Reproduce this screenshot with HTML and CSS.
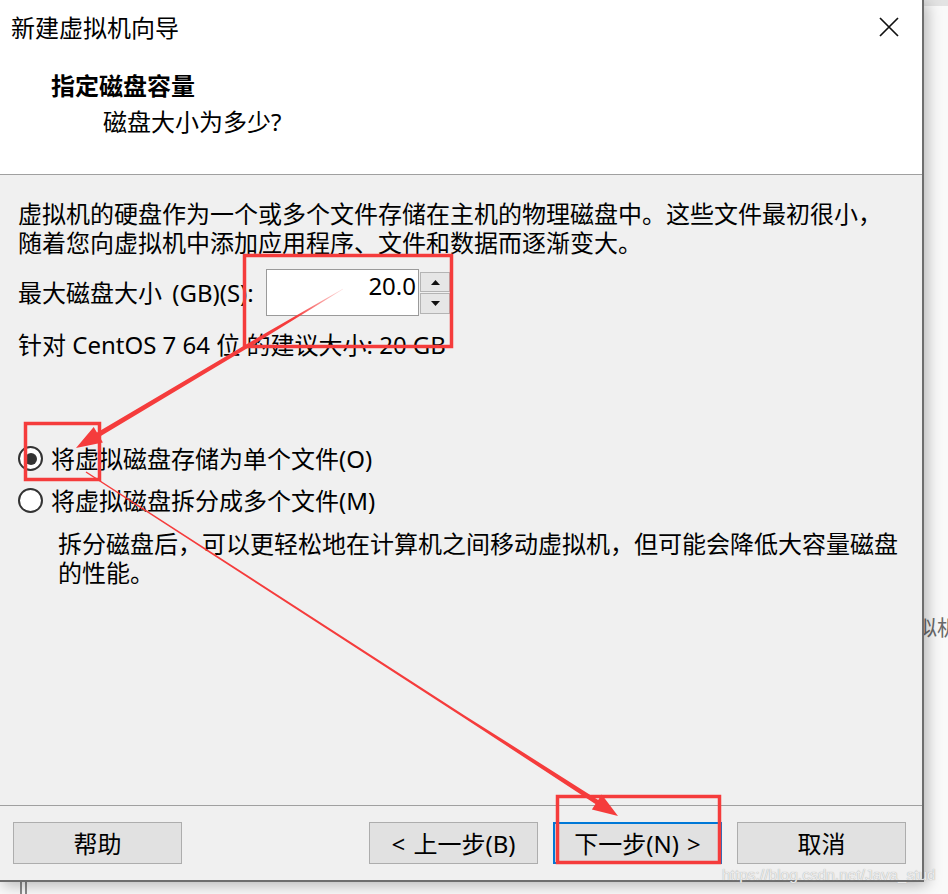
FILE: index.html
```html
<!DOCTYPE html>
<html lang="zh-CN">
<head>
<meta charset="utf-8">
<title>新建虚拟机向导</title>
<link rel="stylesheet" href="styles.css">
</head>
<body>
<div class="screen">
  <div class="backdrop">
    <div class="backdrop-bar"></div>
    <div class="backdrop-rail"></div>
    <div class="backdrop-text">虚拟机向导</div>
  </div>

  <div class="dialog">
    <header class="dlg-head">
      <div class="title-row">
        <div class="title">新建虚拟机向导</div>
        <svg class="close" width="20" height="20" viewBox="0 0 20 20" aria-label="关闭">
          <path d="M1 1 L19 19 M19 1 L1 19" stroke="#111" stroke-width="1.7" fill="none"/>
        </svg>
      </div>
      <div class="step-title">指定磁盘容量</div>
      <div class="step-sub">磁盘大小为多少?</div>
    </header>

    <main class="dlg-body">
      <p class="intro">虚拟机的硬盘作为一个或多个文件存储在主机的物理磁盘中。这些文件最初很小，<br>随着您向虚拟机中添加应用程序、文件和数据而逐渐变大。</p>

      <div class="size-row">
        <label class="size-label">最大磁盘大小 (GB)(S):</label>
        <div class="spin">
          <div class="spin-field">20.0</div>
          <div class="spin-btns">
            <div class="spin-btn up"><svg width="9" height="5" viewBox="0 0 9 5"><polygon points="4.5,0 9,5 0,5" fill="#111"/></svg></div>
            <div class="spin-btn down"><svg width="9" height="5" viewBox="0 0 9 5"><polygon points="0,0 9,0 4.5,5" fill="#111"/></svg></div>
          </div>
        </div>
      </div>

      <p class="hint">针对 CentOS 7 64 位 的建议大小: 20 GB</p>

      <div class="options">
        <div class="radio-row"><span class="radio checked"></span><span>将虚拟磁盘存储为单个文件(O)</span></div>
        <div class="radio-row"><span class="radio"></span><span>将虚拟磁盘拆分成多个文件(M)</span></div>
        <p class="desc">拆分磁盘后，可以更轻松地在计算机之间移动虚拟机，但可能会降低大容量磁盘<br>的性能。</p>
      </div>
    </main>

    <footer class="dlg-foot">
      <button class="btn btn-help">帮助</button>
      <button class="btn">&lt; 上一步(B)</button>
      <button class="btn btn-focus">下一步(N) &gt;</button>
      <button class="btn">取消</button>
    </footer>
  </div>

  <div class="watermark">https://blog.csdn.net/Java_stud</div>

  <svg class="annot" width="948" height="894" viewBox="0 0 948 894">
    <defs>
      <linearGradient id="fadeA" gradientUnits="userSpaceOnUse" x1="343" y1="289" x2="295" y2="318">
        <stop offset="0" stop-color="#f53c3c" stop-opacity="0.15"/>
        <stop offset="1" stop-color="#f53c3c" stop-opacity="1"/>
      </linearGradient>
    </defs>
    <rect x="244.5" y="255.5" width="207" height="91" fill="none" stroke="#f53c3c" stroke-width="3.5"/>
    <rect x="25.5" y="423.5" width="74" height="56" fill="none" stroke="#f53c3c" stroke-width="3.5"/>
    <rect x="557.5" y="796.5" width="162" height="66" fill="none" stroke="#f53c3c" stroke-width="3.5"/>
    <polygon fill="url(#fadeA)" points="343.1,289.3 251,346.1 99.6,436.8 102.9,442.4 76,448 93.7,427 97,432.6 249,342.7 342.9,288.7"/>
    <polygon fill="#f53c3c" points="85.6,472.5 463.4,717.4 595.4,804.1 591.9,809.6 618,816 601.7,794.4 598.2,799.9 464.6,715.4 86.4,471.5"/>
  </svg>
</div>
</body>
</html>
```

FILE: styles.css
```css
* { box-sizing: border-box; }

html, body {
  margin: 0;
  padding: 0;
}

body {
  width: 948px;
  height: 894px;
  overflow: hidden;
  background: #f9f9f9;
  font-family: "Noto Sans", "Noto Sans CJK SC", sans-serif;
  color: #000;
}

.screen {
  position: relative;
  width: 948px;
  height: 894px;
  overflow: hidden;
}

/* window behind the dialog */
.backdrop {
  position: absolute;
  inset: 0;
  background: #f9f9f9;
}

.backdrop-bar {
  height: 6px;
  background: #e3e3e3;
}

.backdrop-rail {
  position: absolute;
  left: 20px;
  top: 0;
  width: 7px;
  height: 894px;
  border-left: 2px solid #8a8a8a;
  border-right: 2px solid #8a8a8a;
}

.backdrop-text {
  position: absolute;
  left: 895px;
  top: 613px;
  font-size: 21px;
  line-height: 28px;
  color: #6a6a6a;
  white-space: nowrap;
}

/* dialog */
.dialog {
  position: relative;
  z-index: 1;
  width: 924px;
  height: 882px;
  border-right: 2px solid #6e6e6e;
  border-bottom: 2px solid #6e6e6e;
  background: #f0f0f0;
  display: flex;
  flex-direction: column;
  box-shadow: 3px 3px 14px rgba(0, 0, 0, 0.28);
}

.dlg-head {
  flex: none;
  height: 175px;
  background: #fff;
  border-bottom: 1px solid #a0a0a0;
}

.title-row {
  display: flex;
  justify-content: space-between;
  align-items: center;
  height: 36px;
  margin-top: 10px;
  padding-left: 11px;
  padding-right: 23px;
}

.title {
  font-size: 24px;
  line-height: 36px;
}

.close {
  display: block;
  margin-top: -2px;
}

.step-title {
  margin-top: 22px;
  padding-left: 51px;
  font-size: 24px;
  font-weight: 700;
  line-height: 36px;
}

.step-sub {
  padding-left: 103px;
  font-size: 24px;
  line-height: 36px;
}

.dlg-body {
  flex: 1;
  padding: 23.5px 0 0 18px;
  font-size: 24px;
}

.intro {
  margin: 0;
  line-height: 29px;
}

.size-row {
  display: flex;
  align-items: center;
  height: 47px;
  margin-top: 12.5px;
}

.size-label {
  width: 248px;
  line-height: 29px;
  white-space: nowrap;
  word-spacing: 4px;
}

.spin {
  display: flex;
  height: 47px;
}

.spin-field {
  width: 153px;
  height: 47px;
  background: #fff;
  border: 1px solid #9a9a9a;
  display: flex;
  justify-content: flex-end;
  align-items: flex-start;
  padding-right: 2px;
  line-height: 32px;
}

.spin-btns {
  display: flex;
  flex-direction: column;
  gap: 1px;
  padding: 3px 0 2px 1px;
}

.spin-btn {
  width: 30px;
  height: 20px;
  background: #e6e6e6;
  border: 1px solid #b4b4b4;
  display: flex;
  align-items: center;
  justify-content: center;
}

.spin-btn.down {
  height: 21px;
}

.spin-btn svg {
  display: block;
}

.hint {
  margin: 13.5px 0 0;
  line-height: 29px;
}

.options {
  margin-top: 79.5px;
}

.radio-row {
  display: flex;
  align-items: center;
  gap: 8px;
  height: 41.5px;
  line-height: 29px;
}

.radio {
  flex: none;
  width: 25px;
  height: 25px;
  border-radius: 50%;
  border: 2px solid #333;
  background: #fff;
  display: flex;
  align-items: center;
  justify-content: center;
}

.radio.checked::after {
  content: "";
  width: 12px;
  height: 12px;
  border-radius: 50%;
  background: #333;
}

.desc {
  margin: 7.5px 0 0;
  padding-left: 40px;
  line-height: 29px;
}

.dlg-foot {
  flex: none;
  height: 75px;
  border-top: 1px solid #a0a0a0;
  display: flex;
  gap: 15px;
  padding: 16px 16px 0 13px;
}

.btn {
  width: 169px;
  height: 42px;
  margin: 0;
  padding: 0;
  background: #e1e1e1;
  border: 1px solid #adadad;
  font-family: inherit;
  font-size: 24px;
  word-spacing: 2px;
  color: #000;
  display: flex;
  align-items: center;
  justify-content: center;
  line-height: 29px;
}

.btn-help {
  margin-right: auto;
}

.btn-focus {
  border: 2px solid #0078d7;
}

.watermark {
  position: absolute;
  z-index: 2;
  left: 722px;
  top: 866px;
  font-family: "Liberation Sans", Arial, sans-serif;
  font-size: 15.5px;
  line-height: 18px;
  color: #ececec;
  text-shadow: 0 0 1px #9a9a9a;
  white-space: nowrap;
}

.annot {
  position: absolute;
  z-index: 3;
  left: 0;
  top: 0;
  pointer-events: none;
}
```
